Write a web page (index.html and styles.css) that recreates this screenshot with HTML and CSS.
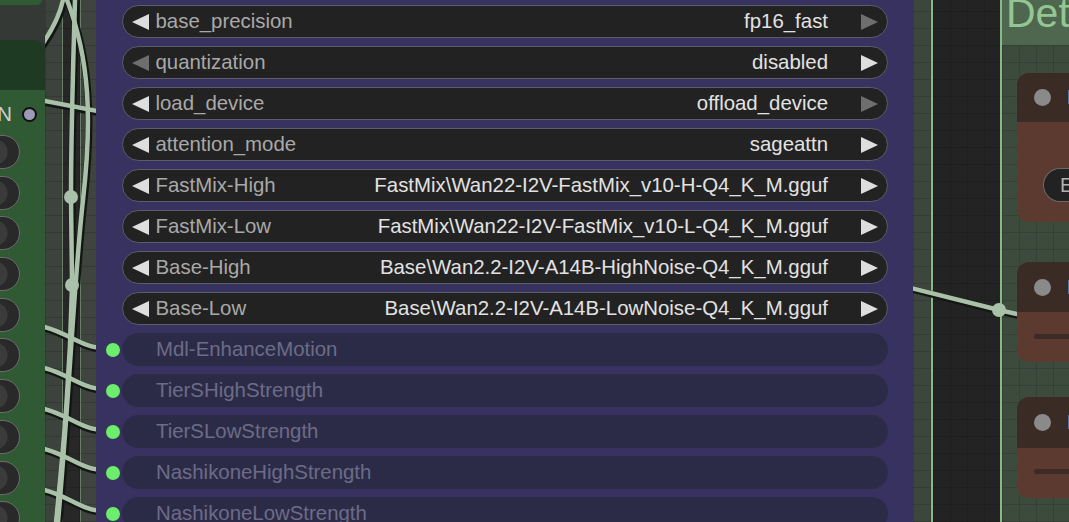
FILE: index.html
```html
<!DOCTYPE html>
<html>
<head>
<meta charset="utf-8">
<link rel="stylesheet" href="styles.css">
</head>
<body>
<div class="canvas">
  <div class="left">
    <div class="gnode-col">
      <div class="gn-stub"></div>
      <div class="gn-head"></div>
      <div class="gn-body">
        <div class="gn-out"><span class="gn-out-label">N</span><span class="gn-out-dot"></span></div>
        <div class="gn-pills">
          <div class="gn-pill"></div><div class="gn-pill"></div><div class="gn-pill"></div><div class="gn-pill"></div><div class="gn-pill"></div>
          <div class="gn-pill"></div><div class="gn-pill"></div><div class="gn-pill"></div><div class="gn-pill"></div><div class="gn-pill"></div>
        </div>
      </div>
    </div>
    <div class="strip">
      <svg class="wires" width="51" height="522" viewBox="0 0 51 522">
        <g class="wire-shadow">
          <path d="M18 0 C14 18 6 32 -4 46"/>
          <path d="M22 0 C45 60 47 120 38 200 S24 400 13 522"/>
          <path d="M30 0 C27 100 26 150 26 197 L27 285 C25 380 18 450 11 522"/>
          <path d="M0 101 L52 111"/>
          <path d="M-5 326 C20 330 35 348 60 348"/>
          <path d="M-5 367 C20 371 35 389 60 389"/>
          <path d="M-5 408 C20 412 35 430 60 430"/>
          <path d="M-5 448 C20 452 35 470 60 470"/>
          <path d="M-5 489 C20 493 35 511 60 511"/>
        </g>
        <g class="wire">
          <path d="M18 0 C14 18 6 32 -4 46"/>
          <path d="M22 0 C45 60 47 120 38 200 S24 400 13 522"/>
          <path d="M30 0 C27 100 26 150 26 197 L27 285 C25 380 18 450 11 522"/>
          <path d="M0 101 L52 111"/>
          <path d="M-5 326 C20 330 35 348 60 348"/>
          <path d="M-5 367 C20 371 35 389 60 389"/>
          <path d="M-5 408 C20 412 35 430 60 430"/>
          <path d="M-5 448 C20 452 35 470 60 470"/>
          <path d="M-5 489 C20 493 35 511 60 511"/>
        </g>
        <circle class="reroute" cx="26" cy="197" r="7"/>
        <circle class="reroute" cx="27" cy="285" r="7"/>
      </svg>
    </div>
  </div>

  <div class="pnode">
    <div class="row">
      <div class="slot"></div>
      <div class="widget"><span class="arr-l"></span><span class="label">base_precision</span><span class="value">fp16_fast</span><span class="arr-r off"></span></div>
    </div>
    <div class="row">
      <div class="slot"></div>
      <div class="widget"><span class="arr-l off"></span><span class="label">quantization</span><span class="value">disabled</span><span class="arr-r"></span></div>
    </div>
    <div class="row">
      <div class="slot"></div>
      <div class="widget"><span class="arr-l"></span><span class="label">load_device</span><span class="value">offload_device</span><span class="arr-r off"></span></div>
    </div>
    <div class="row">
      <div class="slot"></div>
      <div class="widget"><span class="arr-l"></span><span class="label">attention_mode</span><span class="value">sageattn</span><span class="arr-r"></span></div>
    </div>
    <div class="row">
      <div class="slot"></div>
      <div class="widget"><span class="arr-l"></span><span class="label">FastMix-High</span><span class="value">FastMix\Wan22-I2V-FastMix_v10-H-Q4_K_M.gguf</span><span class="arr-r"></span></div>
    </div>
    <div class="row">
      <div class="slot"></div>
      <div class="widget"><span class="arr-l"></span><span class="label">FastMix-Low</span><span class="value">FastMix\Wan22-I2V-FastMix_v10-L-Q4_K_M.gguf</span><span class="arr-r"></span></div>
    </div>
    <div class="row">
      <div class="slot"></div>
      <div class="widget"><span class="arr-l"></span><span class="label">Base-High</span><span class="value">Base\Wan2.2-I2V-A14B-HighNoise-Q4_K_M.gguf</span><span class="arr-r"></span></div>
    </div>
    <div class="row">
      <div class="slot"></div>
      <div class="widget"><span class="arr-l"></span><span class="label">Base-Low</span><span class="value">Base\Wan2.2-I2V-A14B-LowNoise-Q4_K_M.gguf</span><span class="arr-r"></span></div>
    </div>
    <div class="row">
      <div class="slot"><span class="in-dot"></span></div>
      <div class="input">Mdl-EnhanceMotion</div>
    </div>
    <div class="row">
      <div class="slot"><span class="in-dot"></span></div>
      <div class="input">TierSHighStrength</div>
    </div>
    <div class="row">
      <div class="slot"><span class="in-dot"></span></div>
      <div class="input">TierSLowStrength</div>
    </div>
    <div class="row">
      <div class="slot"><span class="in-dot"></span></div>
      <div class="input">NashikoneHighStrength</div>
    </div>
    <div class="row">
      <div class="slot"><span class="in-dot"></span></div>
      <div class="input">NashikoneLowStrength</div>
    </div>
  </div>

  <div class="right">
    <div class="band"></div>
    <div class="gline"></div>
    <div class="dark"></div>
    <div class="gline"></div>
    <div class="group">
      <div class="group-head"><span class="group-title">Det</span></div>
      <div class="group-body">
        <div class="bnode bnode-1">
          <div class="bn-head"><span class="bn-dot"></span><span class="bn-title">Load</span></div>
          <div class="bn-body"><div class="bn-pill">E</div></div>
        </div>
        <div class="bnode bnode-2">
          <div class="bn-head"><span class="bn-dot"></span><span class="bn-title">Load</span></div>
          <div class="bn-body"><div class="bn-bar"></div></div>
        </div>
        <div class="bnode bnode-3">
          <div class="bn-head"><span class="bn-dot"></span><span class="bn-title">Load</span></div>
          <div class="bn-body"><div class="bn-bar"></div></div>
        </div>
      </div>
    </div>
    <svg class="rwire" width="155" height="522" viewBox="0 0 155 522">
      <path class="wire-shadow-s" d="M-2 289 L86 311 L104 315"/>
      <path class="wire-s" d="M-2 288 L86 310 L104 314"/>
      <circle class="reroute" cx="86" cy="310" r="7"/>
    </svg>
  </div>
</div>
</body>
</html>
```

FILE: styles.css
```css
* { box-sizing: border-box; }
html, body { margin: 0; padding: 0; }
body {
  width: 1069px;
  height: 522px;
  overflow: hidden;
  background: #222;
  font-family: "Liberation Sans", Arial, sans-serif;
}
.canvas { display: flex; height: 522px; }

/* ---------- left: green node + canvas strip ---------- */
.left { display: flex; width: 96px; flex: none; }
.gnode-col {
  width: 45px;
  display: flex;
  flex-direction: column;
  background: #353935;
  position: relative;
  z-index: 2;
}
.gn-stub { width: 42px; height: 5px; background: #2f5a34; border-bottom-right-radius: 6px; }
.gn-head { margin-top: 35px; height: 50px; background: #1f3a22; border-top-right-radius: 10px; }
.gn-body { flex: 1; background: #2f5a34; display: flex; flex-direction: column; overflow: hidden; }
.gn-out {
  margin-top: 14px;
  height: 20px;
  display: flex;
  align-items: center;
  justify-content: flex-end;
  padding-right: 8px;
  gap: 10px;
}
.gn-out-label { color: #cfcfcf; font-size: 20.4px; line-height: 20px; }
.gn-out-dot { width: 15px; height: 15px; border-radius: 50%; background: #9c9ab8; border: 2px solid #111; flex: none; }
.gn-pills { display: flex; flex-direction: column; gap: 6.7px; margin-top: 11px; }
.gn-pill {
  width: 40px;
  height: 34px;
  margin-left: -20px;
  flex: none;
  border-radius: 17px;
  border: 1.5px solid #6b6b6b;
  background: radial-gradient(circle at 14px 50%, #3c3b3c 0 12px, #2a292a 13px);
}
.strip {
  flex: 1;
  position: relative;
  background:
    repeating-linear-gradient(0deg, rgba(0,0,0,0.14) 0 1px, transparent 1px 17px),
    repeating-linear-gradient(90deg, rgba(0,0,0,0.14) 0 1px, transparent 1px 17px),
    linear-gradient(90deg, #3c423c 0 17px, #7d977d 17px 18px, #262726 18px 35px, #6a7d6a 35px 36px, #3f443f 36px);
}
.wires { position: absolute; left: 0; top: 0; }
.wires path, .rwire path { fill: none; stroke-linecap: round; }
.wire-shadow path { stroke: #141614; stroke-width: 7; transform: translate(1px, 1.5px); }
.wire path { stroke: #a9c1a9; stroke-width: 4.5; }
.reroute { fill: #a9c1a9; }

/* ---------- purple node ---------- */
.pnode {
  width: 817px;
  flex: none;
  background: #37325f;
  display: flex;
  flex-direction: column;
  gap: 8px;
  padding-top: 5px;
  position: relative;
  z-index: 2;
}
.row { display: flex; align-items: center; height: 33px; flex: none; }
.slot { width: 26px; flex: none; display: flex; align-items: center; padding-left: 10px; }
.in-dot { width: 14px; height: 14px; border-radius: 50%; background: #6cee6c; flex: none; }
.widget {
  flex: 1;
  margin-right: 25px;
  height: 33px;
  border-radius: 16.5px;
  background: #222;
  border: 1.5px solid #5d5c68;
  display: flex;
  align-items: center;
  padding: 0 9px 0 9px;
  font-size: 20.4px;
}
.arr-l, .arr-r { width: 0; height: 0; border-top: 8px solid transparent; border-bottom: 8px solid transparent; flex: none; }
.arr-l { border-right: 17px solid #dedede; }
.arr-r { border-left: 17px solid #dedede; }
.arr-l.off { border-right-color: #6e6e6e; }
.arr-r.off { border-left-color: #6e6e6e; }
.label { color: #a9a9a9; margin-left: 6.5px; flex: 1; white-space: nowrap; }
.value { color: #e2e2e2; margin-right: 33px; white-space: nowrap; }
.input {
  flex: 1;
  margin-right: 25px;
  height: 33px;
  border-radius: 16.5px;
  background: #2c2b47;
  display: flex;
  align-items: center;
  padding-left: 34px;
  color: #6c6b88;
  font-size: 20.4px;
}

/* ---------- right side ---------- */
.right { flex: 1; display: flex; position: relative; }
.band, .dark, .group-body {
  background-image:
    repeating-linear-gradient(0deg, rgba(0,0,0,0.13) 0 1px, transparent 1px 17px),
    repeating-linear-gradient(90deg, rgba(0,0,0,0.13) 0 1px, transparent 1px 17px);
}
.band { width: 18px; background-color: #3c463c; }
.gline { width: 2px; background: #88ba88; }
.dark { width: 67px; background-color: #232323; }
.group { flex: 1; display: flex; flex-direction: column; overflow: hidden; }
.group-head { height: 45px; background: #4e674e; padding-left: 4px; overflow: hidden; flex: none; }
.group-title { display: block; color: #93c693; font-size: 41px; line-height: 41px; margin-top: -7px; white-space: nowrap; }
.group-body { flex: 1; background-color: #3d4b3d; display: flex; flex-direction: column; }
.bnode {
  margin-left: 15px;
  width: 80px;
  border-radius: 12px 0 0 12px;
  overflow: hidden;
  display: flex;
  flex-direction: column;
  position: relative;
  z-index: 2;
  flex: none;
}
.bnode-1 { margin-top: 28px; }
.bnode-2 { margin-top: 40px; }
.bnode-3 { margin-top: 35px; }
.bn-head { height: 49px; background: #3a2b24; display: flex; align-items: center; padding-left: 17px; gap: 16px; }
.bnode-2 .bn-head { height: 50px; }
.bnode-3 .bn-head { height: 51px; }
.bn-dot { width: 17px; height: 17px; border-radius: 50%; background: #8a8a8a; flex: none; }
.bn-title { color: #d0d0d0; font-size: 20px; white-space: nowrap; }
.bn-body { background: #5c3a2f; }
.bnode-1 .bn-body { height: 100px; padding: 46px 0 0 26px; }
.bnode-2 .bn-body { height: 50px; padding: 22px 0 0 17px; }
.bnode-3 .bn-body { height: 50px; padding: 21px 0 0 17px; }
.bn-pill {
  height: 34px;
  border-radius: 17px 0 0 17px;
  background: #222;
  border: 1.5px solid #6b6b6b;
  border-right: none;
  color: #b0b0b0;
  font-size: 20px;
  display: flex;
  align-items: center;
  padding-left: 16px;
}
.bn-bar { height: 5px; border-radius: 3px 0 0 3px; background: #3b2a25; }
.rwire { position: absolute; left: 0; top: 0; z-index: 1; }
.wire-shadow-s { stroke: #141614; stroke-width: 7; }
.wire-s { stroke: #a9c1a9; stroke-width: 4.5; }
```
